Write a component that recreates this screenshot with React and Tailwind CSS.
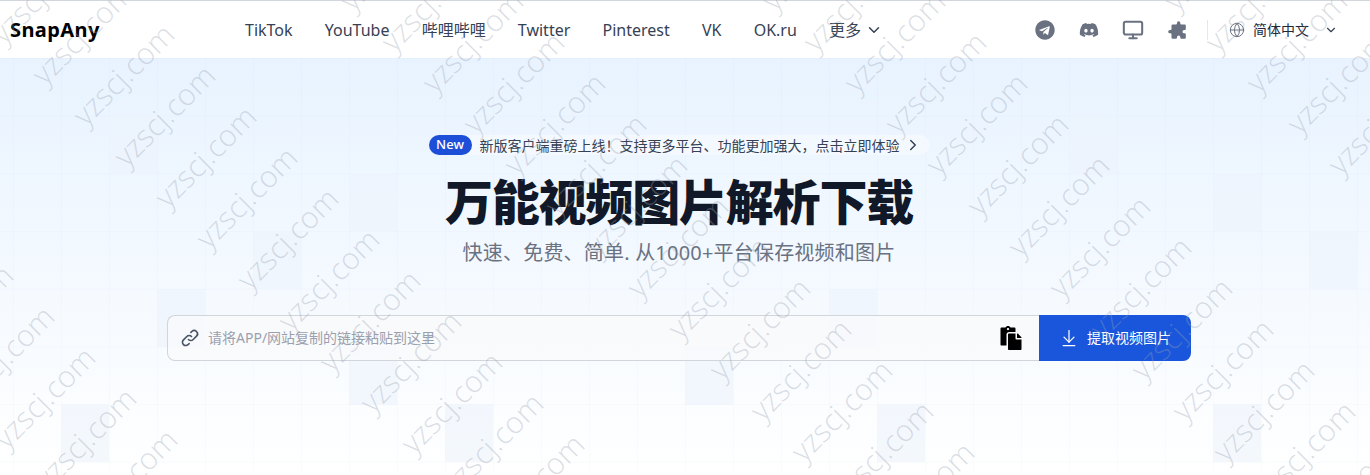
import { ChevronDown, ChevronRight, Globe, Monitor, ArrowDownToLine } from "lucide-react";
import { FaTelegram, FaDiscord, FaPaste } from "react-icons/fa";
import { HiPuzzle, HiOutlineLink } from "react-icons/hi";

const navItems = ["TikTok", "YouTube", "哔哩哔哩", "Twitter", "Pinterest", "VK", "OK.ru"];

// [col, row] of the slightly darker cells in the background grid
const tiles = [
  [2, 1], [7, 2], [5, 3], [27, 3], [3, 4], [17, 4], [22, 1], [25, 2], [7, 5], [14, 5], [9, 6], [1, 6], [18, 6], [25, 6],
];

// each watermark row is the line x - y = c, with y0 as the phase along it
const rows = [[-353, 110], [49, 115], [431, 123], [853, 123], [1255, 123]];

const marks = [];
rows.forEach(([c, y0]) => {
  for (let k = -6; k < 12; k++) {
    const y = y0 + k * 41;
    const x = c + y;
    if (x > -80 && x < 1450) marks.push([x, y]);
  }
});

export default function App() {
  return (
    <div className="relative h-[475px] w-[1370px] overflow-hidden bg-white font-['Noto_Sans','Noto_Sans_CJK_SC',sans-serif]">
      <header className="flex h-[58px] items-center border-t border-gray-300 bg-white">
        <span className="ml-[10px] w-[235px] text-[20px] font-bold tracking-[0.02em] text-black">SnapAny</span>
        <nav className="flex items-center gap-[32.2px] text-[16px] text-gray-700">
          {navItems.map((item) => (
            <a key={item} href="#">{item}</a>
          ))}
          <a href="#" className="flex items-center gap-[4px]">
            更多 <ChevronDown className="h-[18px] w-[18px]" />
          </a>
        </nav>
        <div className="ml-auto flex items-center text-gray-500">
          <FaTelegram className="h-[20px] w-[20px]" />
          <FaDiscord className="ml-[24px] h-[20px] w-[20px]" />
          <Monitor className="ml-[23px] h-[22px] w-[22px] stroke-[2.25]" />
          <HiPuzzle className="ml-[22px] h-[22px] w-[22px]" />
          <div className="ml-[19px] h-[20px] w-px bg-gray-200" />
          <Globe className="ml-[21px] h-4 w-4 stroke-[1.5]" />
          <span className="ml-[8px] text-[14px] text-gray-800">简体中文</span>
          <ChevronDown className="ml-[15px] mr-[32px] h-[14px] w-[14px] text-gray-700" />
        </div>
      </header>

      <main className="relative flex h-[417px] flex-col items-center bg-gradient-to-b from-[#e8f3ff] to-white pr-[12px]">
        <div className="absolute inset-0 bg-[linear-gradient(to_right,#4a6fa506_1px,transparent_1px),linear-gradient(to_bottom,#4a6fa506_1px,transparent_1px)] bg-[size:48px_57.7px] bg-[position:13px_0]" />
        {tiles.map(([col, row]) => (
          <div
            key={`${col}-${row}`}
            className="absolute h-[58px] w-[48px] bg-[#edf3fc]/60"
            style={{ left: 13 + col * 48, top: row * 57.7 }}
          />
        ))}

        <div className="relative mt-[77px] flex h-[20px] w-[501px] items-center rounded-full bg-white/40 pr-[8px]">
          <span className="flex h-[20px] w-[43px] items-center justify-center rounded-full bg-[#1d4ed8] text-[13px] font-medium text-white">New</span>
          <span className="ml-[8px] text-[14px] text-gray-700">新版客户端重磅上线！支持更多平台、功能更加强大，点击立即体验</span>
          <ChevronRight className="ml-auto h-[18px] w-[18px] text-gray-700" />
        </div>

        <h1 className="relative mt-[17px] text-5xl leading-[60px] font-black tracking-tight text-[#111827]">万能视频图片解析下载</h1>
        <p className="relative mt-[7px] text-[20px] leading-[28px] tracking-[0.2px] text-gray-500">快速、免费、简单. 从1000+平台保存视频和图片</p>

        <div className="relative mt-[48px] flex h-[46px] w-[1024px]">
          <div className="flex flex-1 items-center rounded-l-lg border border-r-0 border-gray-300 bg-gray-50/80 pl-[12px] pr-[16px]">
            <HiOutlineLink className="h-[20px] w-[20px] text-gray-600" />
            <span className="mb-[2px] ml-[8px] text-[14px] text-gray-400">请将APP/网站复制的链接粘贴到这里</span>
            <FaPaste className="ml-auto h-[24px] w-[24px] text-black" />
          </div>
          <button className="flex w-[152px] items-center justify-center gap-[8px] rounded-r-lg bg-[#1a56db] text-[14px] text-white">
            <ArrowDownToLine className="h-[20px] w-[20px] stroke-[1.5]" />
            <span className="mb-[2px]">提取视频图片</span>
          </button>
        </div>
      </main>

      {/* watermark overlay */}
      <div className="pointer-events-none absolute inset-0">
        {marks.map(([x, y]) => (
          <span
            key={`${x}-${y}`}
            className="absolute -translate-x-1/2 -translate-y-1/2 -rotate-45 whitespace-nowrap font-['Open_Sans',sans-serif] text-[30px] font-light text-gray-400/35"
            style={{ left: x, top: y }}
          >
            yzscj.com
          </span>
        ))}
      </div>
    </div>
  );
}
